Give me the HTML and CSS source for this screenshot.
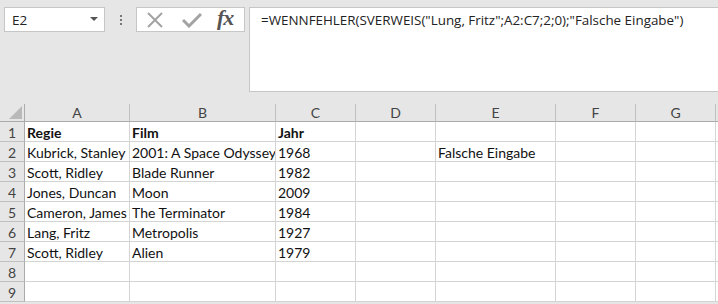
FILE: index.html
```
<!DOCTYPE html>
<html>
<head>
<meta charset="utf-8">
<link rel="stylesheet" href="styles.css">
</head>
<body>
<div class="toolbar">
  <div class="namebox"><span class="nb-text">E2</span><span class="nb-arrow"></span></div>
  <div class="dots"><i></i><i></i><i></i></div>
  <div class="fxbox">
    <svg class="ic ic-x" width="18" height="16" viewBox="0 0 18 16"><path d="M2 1 L16 15 M16 1 L2 15" stroke="#a3a3a3" stroke-width="2" fill="none"/></svg>
    <svg class="ic ic-ok" width="20" height="16" viewBox="0 0 20 16"><path d="M1 8 L7 14 L19 2" stroke="#a3a3a3" stroke-width="3" fill="none"/></svg>
    <span class="fx">fx</span>
  </div>
  <div class="formula">=WENNFEHLER(SVERWEIS("Lung, Fritz";A2:C7;2;0);"Falsche Eingabe")</div>
</div>
<div class="sheet">
  <div class="corner"><span class="tri"></span></div>
  <div class="ch">A</div><div class="ch">B</div><div class="ch">C</div><div class="ch">D</div><div class="ch">E</div><div class="ch">F</div><div class="ch">G</div><div class="ch end"></div>

  <div class="rh">1</div><div class="c b">Regie</div><div class="c b">Film</div><div class="c b">Jahr</div><div class="c"></div><div class="c"></div><div class="c"></div><div class="c"></div><div class="c end"></div>
  <div class="rh">2</div><div class="c">Kubrick, Stanley</div><div class="c">2001: A Space Odyssey</div><div class="c">1968</div><div class="c"></div><div class="c">Falsche Eingabe</div><div class="c"></div><div class="c"></div><div class="c end"></div>
  <div class="rh">3</div><div class="c">Scott, Ridley</div><div class="c">Blade Runner</div><div class="c">1982</div><div class="c"></div><div class="c"></div><div class="c"></div><div class="c"></div><div class="c end"></div>
  <div class="rh">4</div><div class="c">Jones, Duncan</div><div class="c">Moon</div><div class="c">2009</div><div class="c"></div><div class="c"></div><div class="c"></div><div class="c"></div><div class="c end"></div>
  <div class="rh">5</div><div class="c">Cameron, James</div><div class="c">The Terminator</div><div class="c">1984</div><div class="c"></div><div class="c"></div><div class="c"></div><div class="c"></div><div class="c end"></div>
  <div class="rh">6</div><div class="c">Lang, Fritz</div><div class="c">Metropolis</div><div class="c">1927</div><div class="c"></div><div class="c"></div><div class="c"></div><div class="c"></div><div class="c end"></div>
  <div class="rh">7</div><div class="c">Scott, Ridley</div><div class="c">Alien</div><div class="c">1979</div><div class="c"></div><div class="c"></div><div class="c"></div><div class="c"></div><div class="c end"></div>
  <div class="rh">8</div><div class="c"></div><div class="c"></div><div class="c"></div><div class="c"></div><div class="c"></div><div class="c"></div><div class="c"></div><div class="c end"></div>
  <div class="rh">9</div><div class="c"></div><div class="c"></div><div class="c"></div><div class="c"></div><div class="c"></div><div class="c"></div><div class="c"></div><div class="c end"></div>
</div>
</body>
</html>
```
FILE: styles.css
```
html, body {
  margin: 0;
  padding: 0;
  background: #e6e6e6;
  overflow: hidden;
  width: 718px;
  height: 304px;
}
.toolbar {
  display: flex;
  align-items: flex-start;
  height: 104px;
  padding: 7px 0 0 4px;
  box-sizing: border-box;
}
.namebox {
  width: 101px;
  height: 25px;
  box-sizing: border-box;
  background: #fff;
  border: 1px solid #c6c6c6;
  display: flex;
  align-items: center;
  justify-content: space-between;
  padding: 0 6px 0 7px;
  font-family: "Open Sans", sans-serif;
  font-size: 13.5px;
  color: #222;
}
.nb-arrow {
  width: 0;
  height: 0;
  border-left: 4px solid transparent;
  border-right: 4px solid transparent;
  border-top: 4px solid #555;
  margin-top: -2px;
}
.dots {
  width: 31px;
  height: 25px;
  display: flex;
  flex-direction: column;
  align-items: center;
  justify-content: center;
  gap: 2px;
}
.dots i {
  display: block;
  width: 2px;
  height: 2px;
  background: #777;
}
.fxbox {
  width: 109px;
  height: 25px;
  box-sizing: border-box;
  background: #fff;
  border: 1px solid #c6c6c6;
  display: flex;
  align-items: center;
  padding-left: 9px;
}
.ic-x { margin-right: 18px; }
.ic-ok { margin-right: 15px; }
.fx {
  font-family: "Liberation Serif", serif;
  font-style: italic;
  font-weight: bold;
  font-size: 22px;
  color: #555;
  letter-spacing: -1px;
  margin-top: -3px;
}
.formula {
  flex: 1;
  margin-left: 4px;
  height: 85px;
  box-sizing: border-box;
  background: #fff;
  border: 1px solid #c6c6c6;
  border-right: none;
  padding: 3px 0 0 11px;
  font-family: "Open Sans", sans-serif;
  font-size: 13.4px;
  color: #222;
  white-space: nowrap;
}
.sheet {
  display: grid;
  grid-template-columns: 25px 105px 146px 80px 80px 120px 80px 80px 2px;
  grid-template-rows: 18px repeat(9, 20px);
  background: #fff;
  font-family: "Lato", sans-serif;
  font-size: 14px;
  color: #111;
}
.corner {
  background: #e6e6e6;
  border-right: 1px solid #ababab;
  border-bottom: 1px solid #ababab;
  position: relative;
}
.tri {
  position: absolute;
  right: 2px;
  bottom: 2px;
  width: 0;
  height: 0;
  border-left: 13px solid transparent;
  border-bottom: 13px solid #b9b9b9;
}
.ch {
  background: #e6e6e6;
  border-right: 1px solid #c0c0c0;
  border-bottom: 1px solid #ababab;
  text-align: center;
  line-height: 18px;
  color: #444;
  font-size: 14px;
}
.rh {
  background: #e6e6e6;
  border-right: 1px solid #ababab;
  border-bottom: 1px solid #c0c0c0;
  text-align: center;
  padding-top: 2px;
  line-height: 18px;
  color: #444;
  font-size: 14px;
}
.c {
  border-right: 1px solid #d4d4d4;
  border-bottom: 1px solid #d4d4d4;
  padding: 2px 0 0 2px;
  line-height: 18px;
  white-space: nowrap;
  overflow: hidden;
}
.c.b { font-weight: bold; }
.end { border-right: none; }
```
